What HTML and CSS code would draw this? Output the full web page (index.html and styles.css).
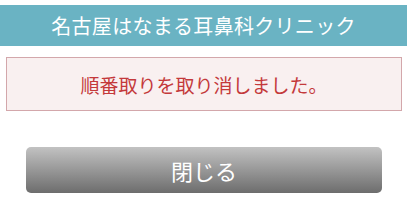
FILE: index.html
```html
<!DOCTYPE html>
<html lang="ja">
<head>
  <meta charset="UTF-8">
  <title>名古屋はなまる耳鼻科クリニック</title>
  <link rel="stylesheet" href="styles.css">
</head>
<body>

<div class="page">
  <h1 class="header">名古屋はなまる耳鼻科クリニック</h1>

  <div class="alert">
    <p>順番取りを取り消しました。</p>
  </div>

  <div class="actions">
    <button class="close-btn">閉じる</button>
  </div>
</div>

</body>
</html>
```

FILE: styles.css
```css
body {
  margin: 0;
  font-family: "Noto Sans CJK JP", "Noto Sans", sans-serif;
  background: #fff;
}

.page {
  width: 408px;
  padding-top: 5px;
}

.header {
  margin: 0 1px 0 0;
  height: 41px;
  background: #6ab3c3;
  color: #fff;
  font-size: 20px;
  font-weight: normal;
  text-align: center;
  line-height: 41px;
  letter-spacing: 0.3px;
}

.alert {
  margin: 11px 6px 0 6px;
  height: 52px;
  border: 1px solid #d3a7ab;
  background: #f9f0f0;
  display: flex;
  align-items: center;
  justify-content: center;
}

.alert p {
  margin: 0;
  color: #c4393b;
  font-size: 19px;
}

.actions {
  display: flex;
  justify-content: center;
  margin-top: 36px;
}

.close-btn {
  width: 356px;
  height: 46px;
  border: none;
  border-radius: 5px;
  background: linear-gradient(#c2c2c2, #6d6d6d);
  color: #fff;
  font-family: inherit;
  font-size: 22px;
  padding: 0;
}
```
